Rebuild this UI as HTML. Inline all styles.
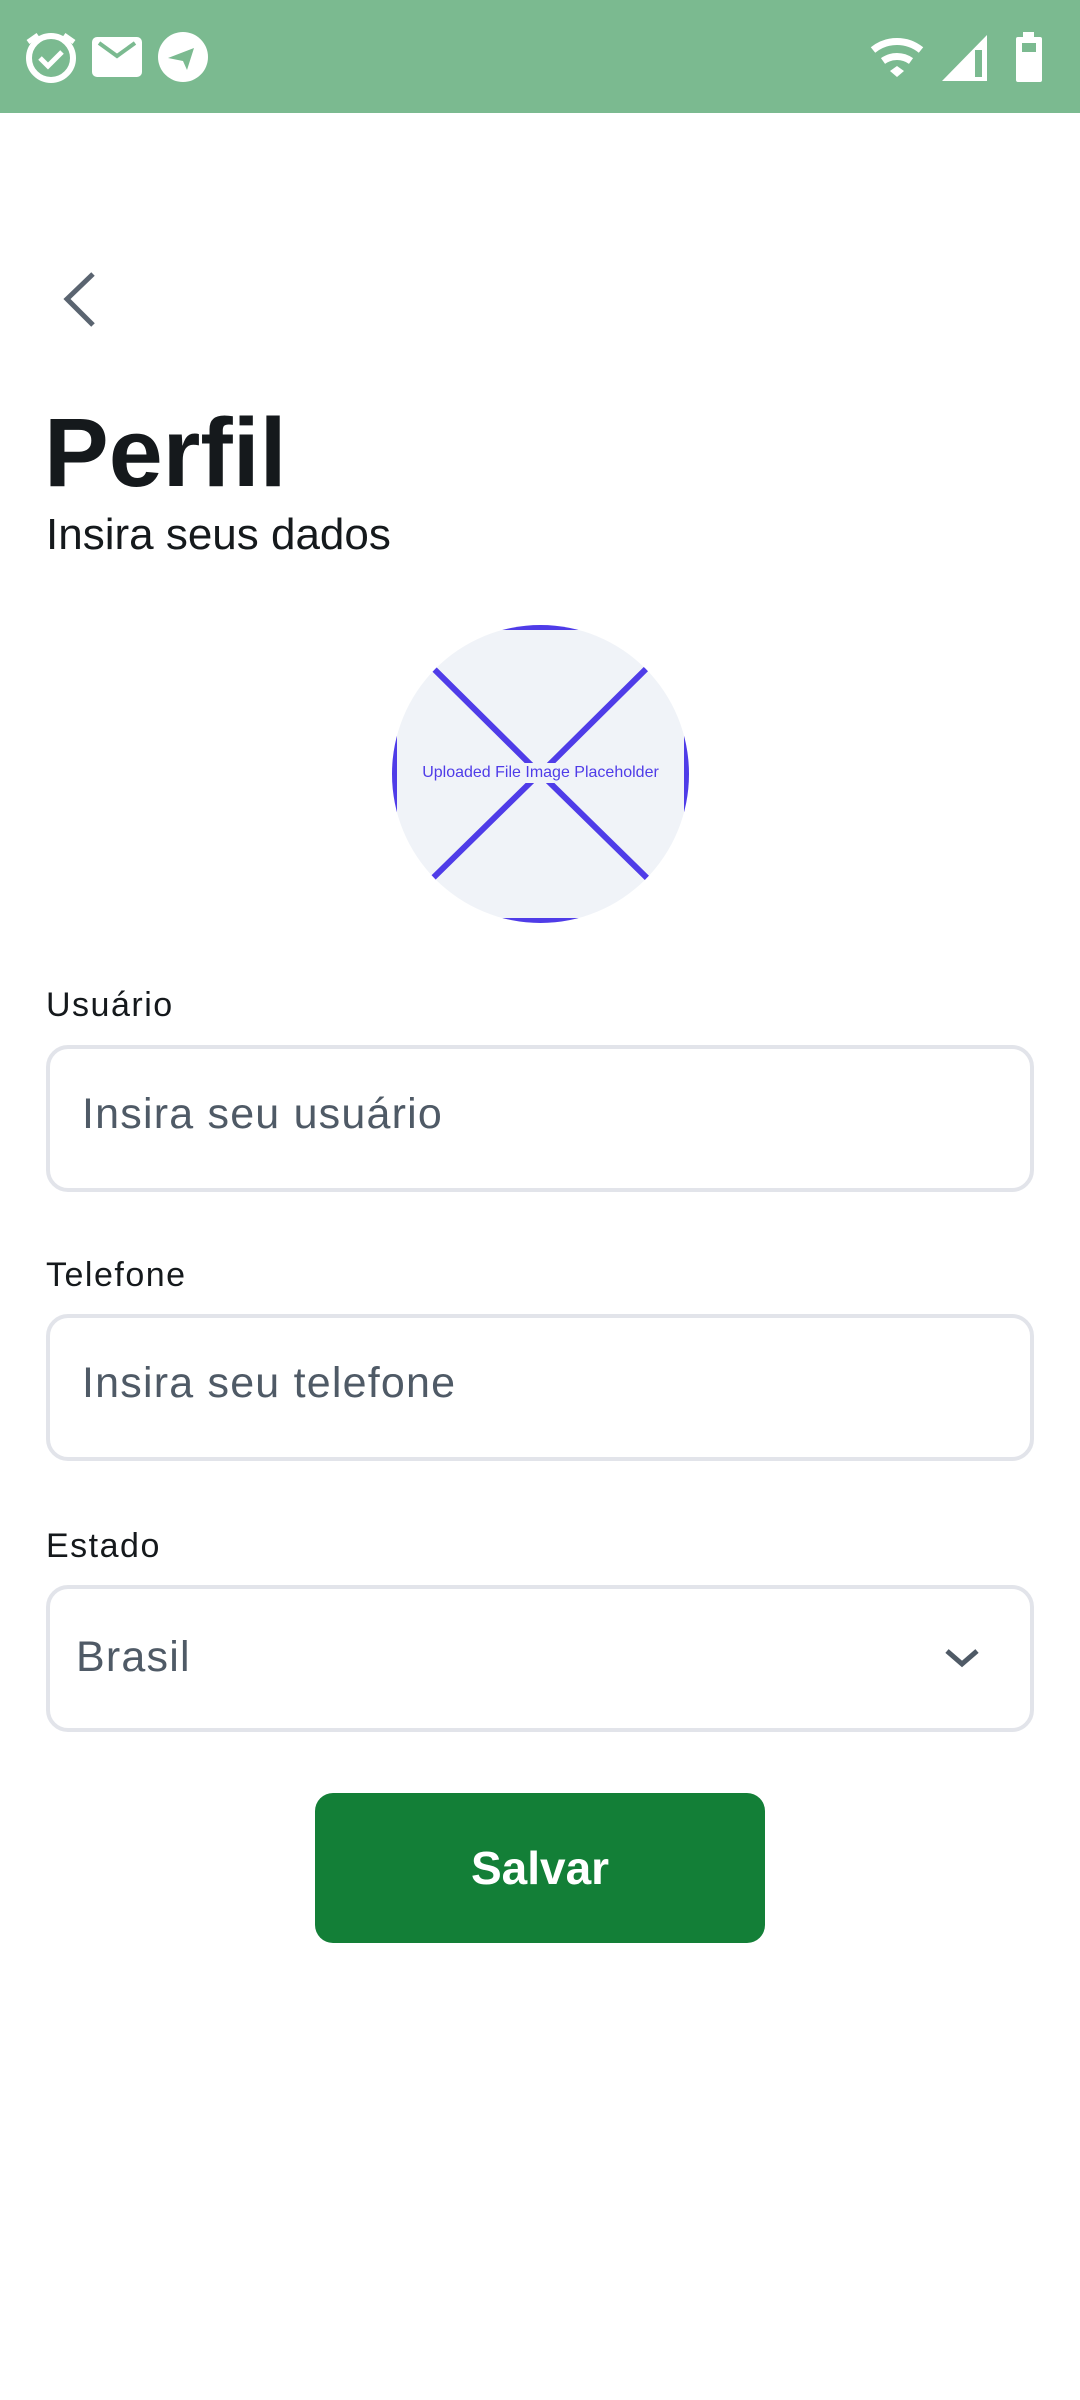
<!DOCTYPE html>
<html><head><meta charset="utf-8"><style>
*{margin:0;padding:0;box-sizing:border-box}
body{width:1080px;height:2400px;background:#fff;font-family:"Liberation Sans",sans-serif;position:relative;overflow:hidden}
.sb{position:absolute;left:0;top:0;width:1080px;height:113px;background:#7bba90}
.abs{position:absolute}
.lbl{position:absolute;left:46px;font-size:34px;color:#15191c;letter-spacing:1.5px}
.inp{position:absolute;left:46px;width:988px;height:147px;border:4px solid #e2e4ea;border-radius:22px}
.ph{position:absolute;font-size:43px;color:#4f5a66;letter-spacing:1.2px}
</style></head><body>
<div class="sb">
<svg class="abs" style="left:0;top:0" width="240" height="113" viewBox="0 0 240 113">
<g fill="none" stroke="#fff" stroke-width="6">
<circle cx="51" cy="58" r="22"/>
<path d="M40 58l8 8 14-14" stroke-width="5"/>
<path d="M28 42l10-7M74 42l-10-7" stroke-width="5"/>
</g>
<rect x="92" y="37" width="50" height="40" rx="5" fill="#fff"/>
<path d="M99 43l18 13 18-13" fill="none" stroke="#7bba90" stroke-width="4"/>
<circle cx="183" cy="57" r="25" fill="#fff"/>
<path d="M168 58l26-10-7 22-4-9z" fill="#7bba90"/>
</svg>
<svg class="abs" style="left:840px;top:0" width="240" height="113" viewBox="0 0 240 113">
<path d="M33 50a38 38 0 0 1 48 0" fill="none" stroke="#fff" stroke-width="7"/>
<path d="M43 61a24 24 0 0 1 28 0" fill="none" stroke="#fff" stroke-width="7"/>
<path d="M50 71l7-5 7 5-7 6z" fill="#fff"/>
<path d="M102 81l45-46v46z" fill="#fff"/>
<rect x="135" y="50" width="7" height="27" fill="#7bba90"/>
<rect x="183" y="32" width="11" height="6" fill="#fff"/>
<rect x="176" y="37" width="26" height="45" rx="2" fill="#fff"/>
<rect x="182" y="43" width="14" height="9" fill="#7bba90"/>
</svg>
</div>
<svg class="abs" style="left:55px;top:268px" width="50" height="64" viewBox="0 0 50 64">
<path d="M38 6L12 31 38 57" fill="none" stroke="#5a6470" stroke-width="5"/>
</svg>
<div class="abs" style="left:44px;top:398px;font-size:97px;font-weight:bold;color:#15191c;line-height:110px">Perfil</div>
<div class="abs" style="left:46px;top:510px;font-size:44px;color:#15191c;line-height:50px">Insira seus dados</div>
<div class="abs" style="left:392px;top:625px;width:297px;height:298px;border-radius:50%;overflow:hidden;background:#f0f3f8">
<div class="abs" style="left:0;top:0;width:297px;height:298px;border:5px solid #4f3ce8"></div>
<svg class="abs" style="left:0;top:0" width="297" height="298"><g stroke="#4f3ce8" stroke-width="6"><path d="M41 43L145 146M255 43L151 146M41 253L145 151M255 253L151 151"/></g>
<rect x="40" y="138" width="217" height="20" fill="#f0f3f8"/></svg>
<div class="abs" style="left:0;top:137px;width:297px;text-align:center;font-size:16px;color:#4f3ce8;line-height:22px">Uploaded File Image Placeholder</div>
</div>
<div class="lbl" style="top:986px">Usuário</div>
<div class="inp" style="top:1045px"></div>
<div class="ph" style="left:82px;top:1090px">Insira seu usuário</div>
<div class="lbl" style="top:1256px">Telefone</div>
<div class="inp" style="top:1314px"></div>
<div class="ph" style="left:82px;top:1359px">Insira seu telefone</div>
<div class="lbl" style="top:1527px">Estado</div>
<div class="inp" style="top:1585px"></div>
<div class="ph" style="left:76px;top:1633px">Brasil</div>
<svg class="abs" style="left:942px;top:1645px" width="40" height="26"><path d="M5 6l15 13 15-13" fill="none" stroke="#4f5a66" stroke-width="5"/></svg>
<div class="abs" style="left:315px;top:1793px;width:450px;height:150px;background:#137f37;border-radius:18px;color:#fff;font-weight:bold;font-size:46px;text-align:center;line-height:150px">Salvar</div>
</body></html>
